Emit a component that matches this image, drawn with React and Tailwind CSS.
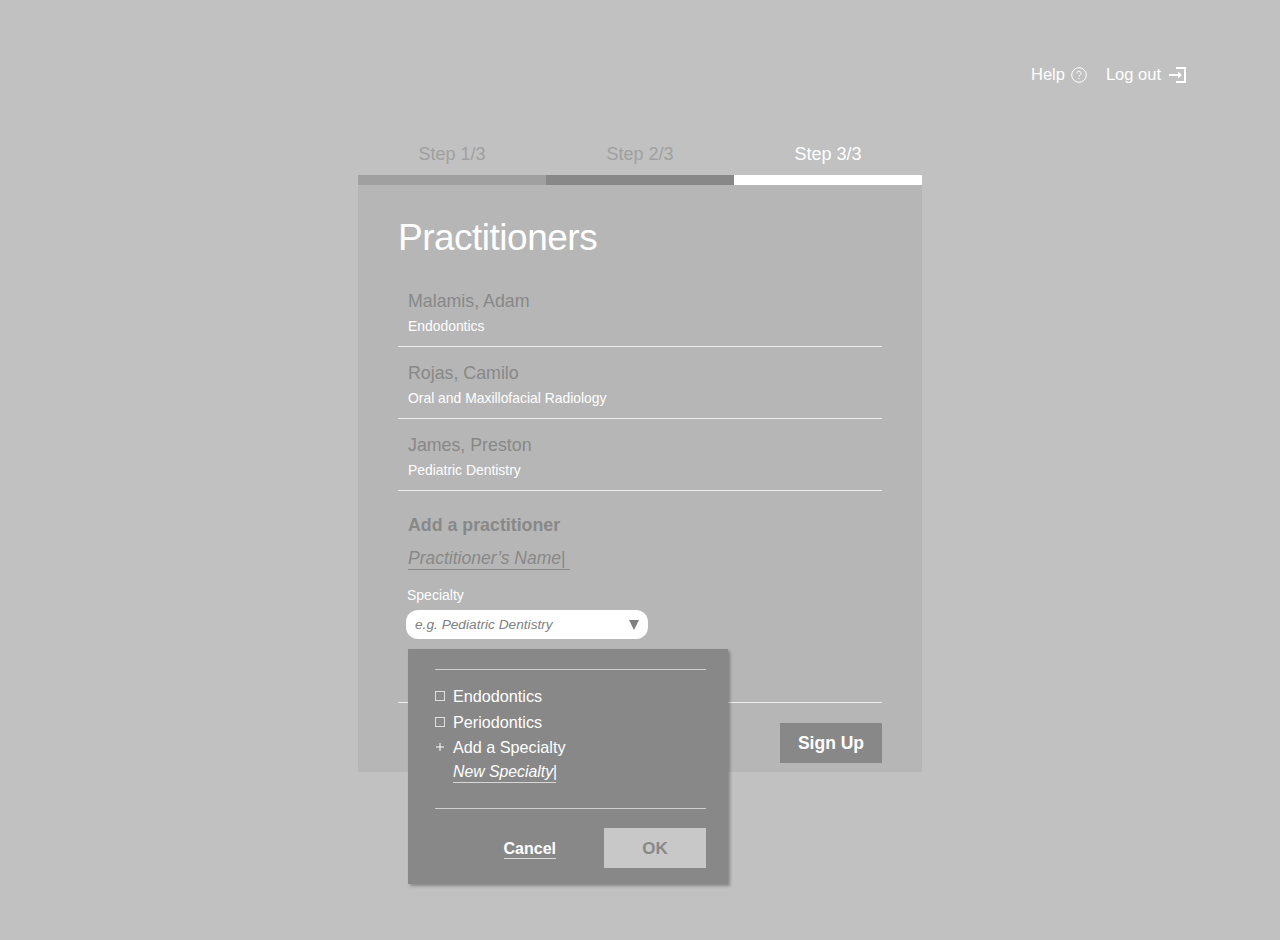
import React from 'react';

const practitioners = [
  { name: 'Malamis, Adam', specialty: 'Endodontics' },
  { name: 'Rojas, Camilo', specialty: 'Oral and Maxillofacial Radiology' },
  { name: 'James, Preston', specialty: 'Pediatric Dentistry' },
];

function HelpIcon() {
  return (
    <svg width="16" height="16" viewBox="0 0 16 16" fill="none" stroke="#fff" strokeWidth="1">
      <circle cx="8" cy="8" r="7.3" />
      <path d="M5.9 6.3a2.1 2.1 0 1 1 3.2 1.8c-.7.4-1.1.8-1.1 1.7" />
      <path d="M8 11.2v1.1" />
    </svg>
  );
}

function LogoutIcon() {
  return (
    <svg width="17" height="16" viewBox="0 0 17 16" fill="none" stroke="#fff">
      <path d="M7 1h9v14H7" strokeWidth="2" />
      <path d="M0 8h10" strokeWidth="2" />
      <path d="M9 4.5L13 8l-4 3.5z" fill="#fff" strokeWidth="0" />
    </svg>
  );
}

function PlusIcon() {
  return (
    <svg width="10" height="10" viewBox="0 0 10 10" fill="none" stroke="#fff" strokeWidth="1">
      <path d="M5 1v8M1 5h8" />
    </svg>
  );
}

function SpecialtyMenu() {
  return (
    <div className="absolute left-[408px] top-[649px] w-[320px] h-[235px] bg-[#888888] shadow-[2px_2px_3px_rgba(0,0,0,0.3)] pl-[27px] pr-[22px] pt-5 text-white">
      <div className="border-t border-b border-[#cfcfcf] h-[140px] pt-[16px]">
        <label className="flex items-center gap-[8px] h-5 text-[16.2px]">
          <span className="w-[10px] h-[10px] border border-[#e0e0e0]" />
          Endodontics
        </label>
        <label className="flex items-center gap-[8px] h-5 mt-[6px] text-[16.2px]">
          <span className="w-[10px] h-[10px] border border-[#e0e0e0]" />
          Periodontics
        </label>
        <div className="flex items-center gap-[8px] h-5 mt-[5px] text-[16.2px]">
          <PlusIcon />
          Add a Specialty
        </div>
        <div className="ml-[18px] mt-[5px] w-[103px] h-[21px] border-b border-[#d8d8d8] text-[15.8px] italic leading-5 whitespace-nowrap">
          New Specialty<span className="not-italic">|</span>
        </div>
      </div>
      <div className="flex items-center justify-end mt-[19px]">
        <button className="mr-12 border-b border-[#d8d8d8] text-[16px] font-bold pt-[2px] leading-[19px]">Cancel</button>
        <button className="w-[102px] h-10 bg-[#c8c8c8] text-[#888888] text-[17px] font-bold pt-px">OK</button>
      </div>
    </div>
  );
}

export default function App() {
  return (
    <div className="relative h-[940px] bg-[#c1c1c1] font-['Liberation_Sans',Arial,sans-serif] overflow-hidden">
      <header className="flex justify-end items-center gap-[19px] pr-[94px] pt-[65px] h-[85px] text-white text-[16.5px]">
        <a className="flex items-center gap-[6px]"><span className="pb-[2px]">Help</span> <HelpIcon /></a>
        <a className="flex items-center gap-[8px]"><span className="pb-[2px]">Log out</span> <LogoutIcon /></a>
      </header>

      <main className="w-[564px] mx-auto mt-[58px]">
        <div className="grid grid-cols-3 text-center text-[18px] h-[32px] pt-px leading-[21px]">
          <div className="text-[#a0a0a0]">Step 1/3</div>
          <div className="text-[#a0a0a0]">Step 2/3</div>
          <div className="text-white">Step 3/3</div>
        </div>
        <div className="grid grid-cols-3 h-[10px]">
          <div className="bg-[#a0a0a0]" />
          <div className="bg-[#888888]" />
          <div className="bg-white" />
        </div>

        <section className="h-[587px] bg-[#b6b6b6] px-10 pt-[30px]">
          <h1 className="text-white text-[37px] tracking-[-0.5px] leading-[46px]">Practitioners</h1>
          <ul className="mt-[14px]">
            {practitioners.map(p => (
              <li key={p.name} className="h-[72px] border-b border-[#ededed] px-[10px] pt-[15px]">
                <div className="text-[#888888] text-[17.8px] leading-[22px]">{p.name}</div>
                <div className="text-white text-[13.9px] leading-[18px] mt-[5px]">{p.specialty}</div>
              </li>
            ))}
          </ul>
          <div className="h-[212px] border-b border-[#ededed] pt-6">
            <h2 className="pl-[10px] text-[#888888] text-[17.8px] font-bold leading-5">Add a practitioner</h2>
            <div className="ml-[10px] mt-[13px] w-[162px] h-[22px] border-b border-[#888888] text-[#888888] text-[17.5px] italic leading-[21px] whitespace-nowrap">
              Practitioner’s Name<span className="not-italic">|</span>
            </div>
            <label className="block ml-[9px] mt-4 text-white text-[14px] leading-[18px]">Specialty</label>
            <div className="ml-2 mt-[6px] w-[242px] h-[29px] bg-white rounded-[12px] flex items-center justify-between pl-[9px] pr-[9px]">
              <span className="text-[#808080] text-[13.7px] italic pt-px">e.g. Pediatric Dentistry</span>
              <span className="mt-px w-0 h-0 border-l-[5.5px] border-r-[5.5px] border-t-[10px] border-l-transparent border-r-transparent border-t-[#808080]" />
            </div>
          </div>
          <div className="flex justify-end mt-5">
            <button className="w-[102px] h-10 bg-[#888888] text-white text-[17.5px] font-bold">Sign Up</button>
          </div>
        </section>
      </main>

      <SpecialtyMenu />
    </div>
  );
}
